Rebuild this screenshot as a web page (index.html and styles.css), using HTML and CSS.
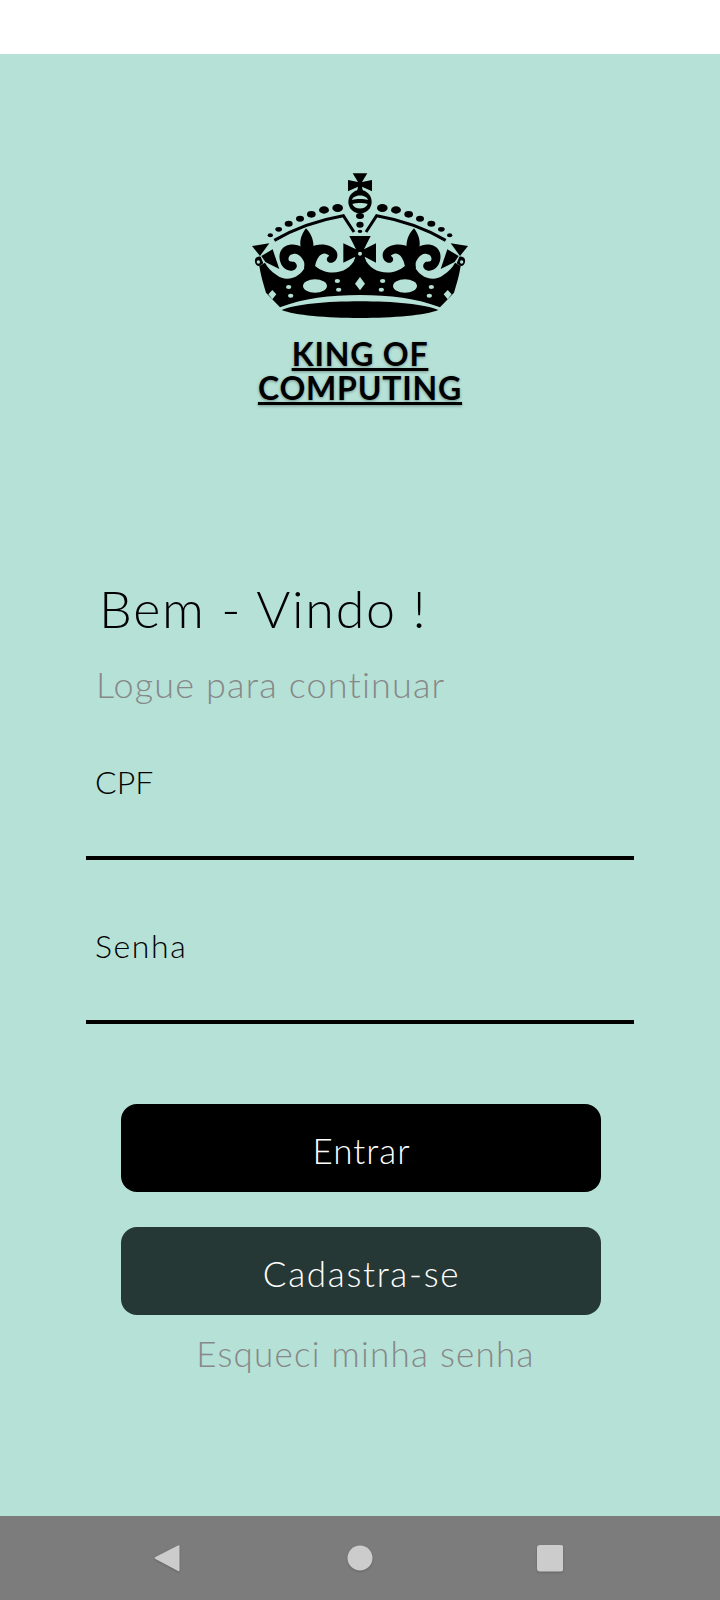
FILE: index.html
```html
<!DOCTYPE html>
<html lang="pt">
<head>
<meta charset="utf-8">
<title>King of Computing</title>
<link rel="stylesheet" href="styles.css">
</head>
<body>
<div class="status"></div>
<main class="screen">
  <div class="logo">
    <svg class="crown" viewBox="0 0 780 510" aria-hidden="true">
      <defs>
        <g id="half">
          <ellipse cx="323" cy="144" rx="16" ry="12"/>
          <ellipse cx="282" cy="150" rx="15" ry="11"/>
          <ellipse cx="244" cy="163" rx="13" ry="10"/>
          <ellipse cx="210" cy="176" rx="12" ry="9"/>
          <ellipse cx="176" cy="191" rx="12" ry="9"/>
          <ellipse cx="146" cy="208" rx="10" ry="7"/>
          <ellipse cx="121" cy="226" rx="8" ry="6"/>
          <path class="band" d="M133 241Q225 187 340 167L372 216"/>
          <path d="M66 258L118 250L90 288Z"/>
          <path d="M128 268L148 327L106 306L94 288Z"/>
          <path d="M228 205C245 222 258 250 246 290L256 325H222L226 290C200 260 212 225 228 205Z"/>
          <path d="M240 262C265 248 305 250 320 275C328 295 312 312 298 308C288 304 288 292 298 288C285 272 262 280 255 320H240Z"/>
          <path d="M216 262C195 248 160 250 150 278C143 305 160 332 182 332C198 332 206 318 196 308C190 302 178 308 176 300C172 285 192 275 206 285C216 292 224 305 226 320H240V270Z"/>
          <path d="M390 296H375C360 335 300 355 255 318H226C215 350 170 370 140 345C125 335 112 322 105 308L88 318C92 345 100 372 108 398L150 442C220 415 300 405 390 405Z"/>
          <path d="M88 318C78 318 72 306 76 296C78 292 84 288 92 290L100 310Z"/>
          <ellipse class="hole" cx="255" cy="378" rx="36" ry="20"/>
          <ellipse class="hole" cx="176" cy="381" rx="8" ry="6"/>
          <ellipse class="hole" cx="182" cy="407" rx="8" ry="6"/>
          <ellipse class="hole" cx="322" cy="363" rx="8" ry="6"/>
          <ellipse class="hole" cx="326" cy="389" rx="8" ry="6"/>
          <path class="hole" d="M127 390L139 403L127 418L115 403Z"/>
          <circle class="hole" cx="85" cy="306" r="5"/>
        </g>
      </defs>
      <use href="#half"/>
      <use href="#half" transform="matrix(-1 0 0 1 780 0)"/>
      <path d="M368 40H412L396 66L426 60V94L396 80L400 100H380L384 80L354 94V60L384 66Z"/>
      <circle cx="390" cy="125" r="35"/>
      <path class="hole" d="M366 120C370 102 410 102 414 120C400 116 380 116 366 120Z"/>
      <path class="hole" d="M367 132C380 128 400 128 413 132C406 150 374 150 367 132Z"/>
      <ellipse cx="390" cy="168" rx="12" ry="9"/>
      <ellipse cx="390" cy="194" rx="11" ry="9"/>
      <ellipse cx="390" cy="214" rx="7" ry="5"/>
      <path d="M358 228H422L402 268L438 250V308L404 290L412 320H368L376 290L340 308V250L378 268Z"/>
      <circle class="hole" cx="390" cy="281" r="6"/>
      <path class="hole" d="M390 351L405 371L390 391L375 371Z"/>
      <path d="M155 450C230 415 550 415 625 450C550 482 230 482 155 450Z"/>
    </svg>
    <h1 class="brand"><span>KING OF</span><span>COMPUTING</span></h1>
  </div>
  <h2 class="welcome">Bem - Vindo !</h2>
  <p class="subtitle">Logue para continuar</p>
  <div class="field field-cpf"><span class="field-label">CPF</span></div>
  <div class="field field-senha"><span class="field-label label-senha">Senha</span></div>
  <div class="actions">
    <button class="btn btn-primary" type="button"><span class="text-entrar">Entrar</span></button>
    <button class="btn btn-secondary" type="button"><span class="text-cadastro">Cadastra-se</span></button>
    <a class="forgot">Esqueci minha senha</a>
  </div>
</main>
<nav class="navbar">
  <svg class="nav-icon" viewBox="0 0 26 28" aria-hidden="true"><path d="M24 1.5Q25.500 0.800 25.500 2.500V26Q25.500 27.800 24 27L1.500 15Q0 14 1.500 13Z"/></svg>
  <svg class="nav-icon nav-home" viewBox="0 0 26 28" aria-hidden="true"><circle cx="13" cy="14" r="12.500"/></svg>
  <svg class="nav-icon" viewBox="0 0 26 28" aria-hidden="true"><rect x="0" y="1" width="26.500" height="26.500" rx="3"/></svg>
</nav>
</body>
</html>
```
FILE: styles.css
```css
* { box-sizing: border-box; }
html, body { margin: 0; padding: 0; }
body {
  width: 720px;
  height: 1600px;
  display: flex;
  flex-direction: column;
  overflow: hidden;
  background: #fff;
  font-family: "Lato", "Liberation Sans", sans-serif;
  font-weight: 300;
  color: #000;
}
.status { height: 54px; background: #fff; flex: none; }
.screen {
  flex: 1;
  background: #b5e1d7;
  display: flex;
  flex-direction: column;
  padding-top: 106px;
}
.logo { display: flex; flex-direction: column; align-items: center; }
.crown { width: 260px; height: 170px; display: block; fill: #000; }
.crown .hole { fill: #b5e1d7; }
.crown .band { fill: none; stroke: #000; stroke-width: 9; }
.brand {
  margin: 7px 0 0;
  font-size: 32px;
  font-weight: 700;
  line-height: 34px;
  letter-spacing: .8px;
  text-align: center;
  text-decoration: underline;
  text-decoration-thickness: 3px;
  text-shadow: 0 1px 3px rgba(0,0,0,.35);
}
.brand span { display: block; }
.welcome {
  margin: 172px 0 0 99px;
  font-size: 52px;
  font-weight: 300;
  line-height: 62px;
  letter-spacing: 1.7px;
}
.subtitle {
  margin: 24px 0 0 96px;
  font-size: 36px;
  line-height: 42px;
  color: #888;
  letter-spacing: 1.15px;
}
.field {
  margin: 0 86px;
  border-bottom: 4px solid #000;
  padding-left: 9px;
}
.field-cpf { height: 96px; margin-top: 59px; }
.field-senha { height: 96px; margin-top: 68px; }
.field-label { font-size: 32px; line-height: 36px; display: block; }
.label-senha { letter-spacing: 1.6px; }
.actions {
  display: flex;
  flex-direction: column;
  align-items: center;
  margin-top: 80px;
  padding-left: 1px;
}
.btn {
  width: 480px;
  height: 88px;
  border: 0;
  border-radius: 16px;
  color: #fff;
  font: inherit;
  font-size: 35px;
  padding: 4px 0 0 2px;
  flex: none;
}
.btn-primary { background: #000; }
.btn-secondary { background: #263836; margin-top: 35px; }
.text-entrar { letter-spacing: 1px; }
.text-cadastro { letter-spacing: 1.7px; }
.forgot {
  margin: 17px 0 0 10px;
  font-size: 35px;
  line-height: 42px;
  color: #888;
  letter-spacing: 1.25px;
}
.navbar {
  height: 84px;
  flex: none;
  background: #7c7c7c;
  display: flex;
  align-items: center;
  justify-content: center;
  padding-right: 3px;
}
.nav-icon { width: 26px; height: 28px; fill: #ccc; filter: drop-shadow(0 1px 1px rgba(0,0,0,.2)); }
.nav-home { margin: 0 164px 0 167px; }
```
